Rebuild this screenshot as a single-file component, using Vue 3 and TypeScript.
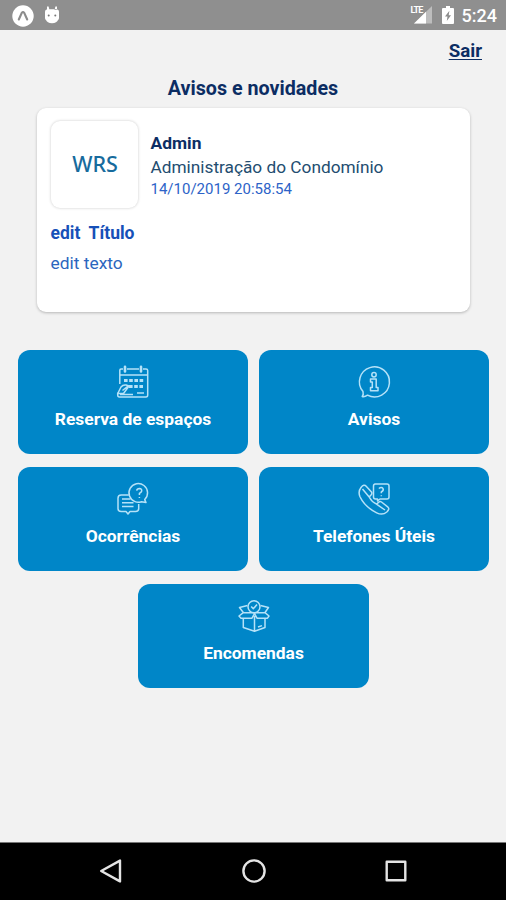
<script setup lang="ts">
type IconName = 'calendar' | 'info' | 'chat' | 'phone' | 'box'

interface MenuItem {
  label: string
  icon: IconName
}

const items: MenuItem[] = [
  { label: 'Reserva de espaços', icon: 'calendar' },
  { label: 'Avisos', icon: 'info' },
  { label: 'Ocorrências', icon: 'chat' },
  { label: 'Telefones Úteis', icon: 'phone' },
  { label: 'Encomendas', icon: 'box' },
]
</script>

<template>
  <div class="screen">
    <header class="status">
      <svg class="expo" viewBox="0 0 22 22">
        <circle cx="11" cy="11" r="10.7" fill="#fff" />
        <path d="M6.8 14.5 L9.8 7.8 Q11 6.3 12.2 7.8 L15.2 14.5" fill="none" stroke="#8c8c8c" stroke-width="2.1" stroke-linecap="round" />
      </svg>
      <svg class="droid" viewBox="0 0 16 18">
        <path d="M1 6 Q1 3.2 4 3.2 H12 Q15 3.2 15 6 V12 Q15 13.5 14 14 Q13 17 8 17.2 Q3 17 2 14 Q1 13.5 1 12Z M3 4 V0.5 H4.6 L5.5 4 M13 4 V0.5 H11.4 L10.5 4" fill="#fff" />
        <circle cx="4.7" cy="9.5" r="1" fill="#777" />
        <circle cx="11.3" cy="9.5" r="1" fill="#777" />
      </svg>
      <span class="spacer"></span>
      <div class="signal">
        <svg viewBox="0 0 18 18">
          <path d="M18 0 V17.5 H0Z" fill="#bdbdbd" />
          <path d="M12 5.8 V17.5 H0Z" fill="#fff" />
        </svg>
        <span class="lte">LTE</span>
      </div>
      <svg class="battery" viewBox="0 0 12 18">
        <path d="M4 0 H8 V2 H11 Q12 2 12 3 V17 Q12 18 11 18 H1 Q0 18 0 17 V3 Q0 2 1 2 H4Z" fill="#fff" />
        <path d="M7.4 4.7 L3 10.6 H5.5 L4.8 15 L9 9.2 H6.7Z" fill="#8c8c8c" />
      </svg>
      <span class="clock">5:24</span>
    </header>

    <main class="content">
      <a class="logout">Sair</a>
      <h1 class="heading">Avisos e novidades</h1>
      <article class="card">
        <div class="author">
          <div class="avatar">WRS</div>
          <div class="meta">
            <strong class="name">Admin</strong>
            <span class="role">Administração do Condomínio</span>
            <time class="date">14/10/2019 20:58:54</time>
          </div>
        </div>
        <h2 class="title">edit&nbsp; Título</h2>
        <p class="body">edit texto</p>
      </article>

      <nav class="menu">
        <button v-for="item in items" :key="item.icon" class="tile" type="button">
          <svg class="icon" viewBox="0 0 32 32">
            <g v-if="item.icon === 'calendar'">
              <path d="M6 3 H4 Q2.8 3 2.8 4.2 V18 M10 3 H22 M26 3 H29 Q30.7 3 30.7 4.5 V29 Q30.7 31 29 31 H2.5 Q.7 31 .7 29 V26.5 M3 9 H30.7" />
              <path d="M8 .8 V5.5 M24 .8 V5.5" stroke-width="2.6" stroke-linecap="round" />
              <path d="M7 14.5 H27 M12 20.5 H27" stroke-width="3.2" stroke-dasharray="3.6 1.6" />
              <path d="M1 27 L4 21 Q6 18.5 9 19 L12 20 L6.5 27.5 H1 M5.5 24.5 L11 20 M3 28.5 H16 M20 27 H27" />
            </g>
            <g v-else-if="item.icon === 'info'">
              <path d="M5 25.6 A15 15 0 1 1 9.5 29.2 Q6.5 31.2 4.2 30.5 Q5.8 28.5 5 25.6Z" />
              <circle cx="16" cy="8.7" r="2.2" />
              <path d="M12.5 13 H18.2 V21.5 H20 V24.7 H12.5 V21.5 H14.3 V16 H12.5Z" />
            </g>
            <g v-else-if="item.icon === 'chat'">
              <path d="M18 18.6 A9.3 9.3 0 1 1 27.7 16.6 L29 19.5 L24.5 18.7 Q21 20 18 18.6" />
              <path d="M11.8 12 H4.2 Q1 12 1 15.2 V25.5 Q1 28.5 4.2 28.5 H9 L11 31 L13 28.5 H18.5 Q21.7 28.5 21.7 25.5 V21 M5 16 H13.5 M5 19.7 H16.5 M5 23.4 H16.5" />
              <path d="M19.7 7.6 Q20 5.4 22.4 5.4 Q25 5.6 24.7 8 Q24.4 9.2 22.4 10.4 V12 M22.4 14 V15" />
            </g>
            <g v-else-if="item.icon === 'phone'">
              <path d="M3 4.5 Q6 .8 8.2 3.2 L13.5 9 Q14.5 10.5 13 12 L11.2 14 Q13.5 18.7 18.5 21.2 L20.5 19.4 Q22 18 23.5 19 L30 24.2 Q32 26 28.8 29 Q24.5 32.7 18.7 29.8 Q6.8 24 2 13.8 Q-.2 8.6 3 4.5Z M4.5 6 L11.2 14 M18.5 21.2 L27 27" />
              <path d="M16.5 1 H29 Q31 1 31 3 V14 Q31 16 29 16 H22 L19.5 18 V16 H17.5 Q15.5 16 15.5 14 V3 Q15.5 1 17.5 1 M20.8 5.5 Q23.5 3.7 25 5.5 Q26 7.4 23.3 9 V10.3 M23.3 12.3 V13.3" />
            </g>
            <g v-else>
              <path d="M5.3 19 V27.5 L16.5 31.2 L27 27.5 V19 M5.3 12.7 H27 M5.3 12.7 L1 16 L3 18.2 H14 L16.5 13.5 L19 18.2 H29.5 L31 16 L27 12.7 M16.5 16 V31 M5.3 12.5 L1.5 7.5 L9.5 5.5 M27 12.5 L30.5 7.5 L22.5 5.5 M20 27 L24 25.6" />
              <circle cx="16" cy="6.8" r="6" />
              <path d="M13.2 6.6 L15.3 8.8 L19 4.6" />
            </g>
          </svg>
          <span class="label">{{ item.label }}</span>
        </button>
      </nav>
    </main>

    <footer class="navbar">
      <svg viewBox="0 0 24 24"><path d="M21 1.6 V22.4 L2.2 12Z" /></svg>
      <svg viewBox="0 0 24 24"><circle cx="12" cy="12" r="10.6" /></svg>
      <svg viewBox="0 0 24 24"><path d="M2.7 2.7 H21.3 V21.3 H2.7Z" /></svg>
    </footer>
  </div>
</template>

<style>
body {
  margin: 0;
}
</style>

<style scoped>
.screen {
  width: 506px;
  height: 900px;
  display: flex;
  flex-direction: column;
  overflow: hidden;
  background: #f2f2f2;
  font-family: Roboto, "Liberation Sans", sans-serif;
}
.status {
  height: 30px;
  box-sizing: border-box;
  padding: 0 9px 0 12px;
  display: flex;
  align-items: center;
  background: #8f8f8f;
  color: #fff;
}
.expo {
  width: 22px;
  height: 22px;
  margin-top: 1px;
}
.droid {
  width: 16px;
  height: 18px;
  margin-left: 10px;
  margin-top: -1px;
}
.spacer {
  flex: 1;
}
.signal {
  position: relative;
  width: 18px;
  height: 18px;
  margin-right: 10px;
}
.signal svg {
  display: block;
  width: 18px;
  height: 18px;
}
.lte {
  position: absolute;
  left: -3px;
  top: -1px;
  font-size: 9px;
  line-height: 10px;
  font-weight: 700;
  letter-spacing: -0.9px;
}
.battery {
  width: 12px;
  height: 18px;
  margin-right: 8px;
}
.clock {
  font-size: 18px;
  font-weight: 500;
  line-height: 30px;
  margin-top: 2px;
}
.content {
  flex: 1;
  display: flex;
  flex-direction: column;
  align-items: center;
}
.logout {
  align-self: flex-end;
  margin: 10px 24px 0 0;
  font-size: 18.7px;
  line-height: 22px;
  font-weight: 700;
  color: #0c2d63;
  text-decoration: underline;
  text-decoration-thickness: 1px;
  text-underline-offset: 2px;
}
.heading {
  margin: 15px 0 0;
  font-size: 19.7px;
  line-height: 24px;
  font-weight: 700;
  color: #0c2d63;
}
.card {
  width: 433px;
  height: 204px;
  margin-top: 7px;
  box-sizing: border-box;
  padding: 13px;
  border-radius: 9px;
  background: #fff;
  box-shadow: 0 1px 3px rgba(0, 0, 0, 0.25);
}
.author {
  display: flex;
  gap: 13px;
  padding-left: 1px;
}
.avatar {
  width: 87px;
  height: 87px;
  border-radius: 9px;
  box-shadow: 0 0 3px rgba(0, 0, 0, 0.22);
  font-family: "Noto Sans", sans-serif;
  font-size: 21.5px;
  font-weight: 500;
  line-height: 86px;
  text-indent: 2px;
  text-align: center;
  color: #176b9d;
}
.meta {
  display: flex;
  flex-direction: column;
  padding-top: 10px;
}
.name {
  font-size: 17.4px;
  line-height: 25px;
  color: #0c2d63;
}
.role {
  font-size: 17.25px;
  line-height: 23px;
  color: #234d70;
}
.date {
  font-size: 15px;
  line-height: 20px;
  color: #2d63c8;
}
.title {
  margin: 13px 0 0 1px;
  font-size: 17.5px;
  line-height: 24px;
  font-weight: 700;
  color: #1650b8;
}
.body {
  margin: 6px 0 0 1px;
  font-size: 17.4px;
  line-height: 24px;
  color: #2c66be;
}
.menu {
  width: 490px;
  margin: 37.5px 0 0 1px;
  display: flex;
  flex-wrap: wrap;
  justify-content: center;
  gap: 13px 10.5px;
}
.tile {
  width: 230.5px;
  height: 104px;
  padding: 16.5px 0 0;
  border: 0;
  border-radius: 12px;
  background: #0086c8;
  display: flex;
  flex-direction: column;
  align-items: center;
  font-family: inherit;
  color: #fff;
}
.icon {
  width: 32px;
  height: 32px;
  fill: none;
  stroke: #b5e2f8;
  stroke-width: 1.5;
  stroke-linejoin: round;
  overflow: visible;
}
.label {
  margin-top: 8.5px;
  font-size: 17.4px;
  line-height: 24px;
  font-weight: 700;
}
.navbar {
  height: 58px;
  border-top: 1px solid #777;
  box-sizing: border-box;
  padding: 0 98px 2px 99px;
  display: flex;
  align-items: center;
  justify-content: space-between;
  background: #000;
}
.navbar svg {
  width: 24px;
  height: 24px;
  fill: none;
  stroke: #e4e4e4;
  stroke-width: 2.4;
  stroke-linejoin: round;
}
</style>
